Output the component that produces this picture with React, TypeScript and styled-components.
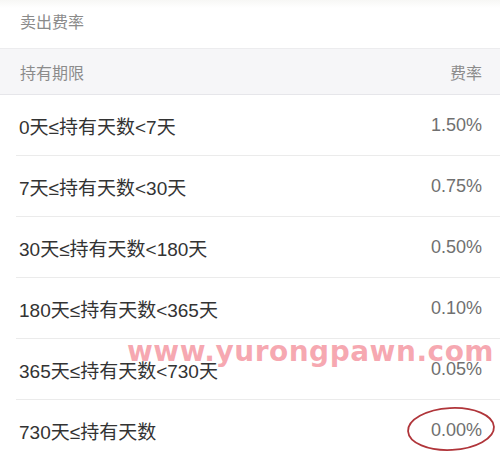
import styled, { createGlobalStyle } from "styled-components";

const GlobalStyle = createGlobalStyle`
  html, body {
    margin: 0;
    padding: 0;
    background: #ffffff;
  }
  body {
    font-family: "Liberation Sans", "Noto Sans CJK SC", sans-serif;
  }
`;

const rates = [
  { term: "0天≤持有天数<7天", rate: "1.50%" },
  { term: "7天≤持有天数<30天", rate: "0.75%" },
  { term: "30天≤持有天数<180天", rate: "0.50%" },
  { term: "180天≤持有天数<365天", rate: "0.10%" },
  { term: "365天≤持有天数<730天", rate: "0.05%" },
  { term: "730天≤持有天数", rate: "0.00%", circled: true },
];

const App = () => {
  return (
    <>
      <GlobalStyle />
      <Page>
        <Title>卖出费率</Title>
        <HeaderRow>
          <span>持有期限</span>
          <span>费率</span>
        </HeaderRow>
        {rates.map((r) => (
          <Row key={r.term}>
            <Term>{r.term}</Term>
            <Rate>
              {r.rate}
              {r.circled && (
                <Circle width="92" height="48" viewBox="0 0 92 48">
                  <ellipse
                    cx="46"
                    cy="24"
                    rx="43"
                    ry="21"
                    fill="none"
                    stroke="#b0353a"
                    strokeWidth="1.8"
                    transform="rotate(-3 46 24)"
                  />
                </Circle>
              )}
            </Rate>
          </Row>
        ))}
        <Watermark>www.yurongpawn.com</Watermark>
      </Page>
    </>
  );
};

export default App;

const Page = styled.div`
  position: relative;
  width: 500px;
  height: 457px;
  overflow: hidden;
  background: linear-gradient(#f7f7f5 0px, #ffffff 8px);
`;

const Title = styled.div`
  height: 48px;
  display: flex;
  align-items: center;
  padding: 0 20px 6px;
  box-sizing: border-box;
  font-family: "Noto Sans CJK SC", sans-serif;
  font-size: 16px;
  color: #8a8a8a;
`;

const HeaderRow = styled.div`
  height: 47px;
  display: flex;
  align-items: center;
  justify-content: space-between;
  padding: 0 18px 0 20px;
  box-sizing: border-box;
  background: #f6f6f8;
  border-top: 1px solid #ececee;
  border-bottom: 1px solid #e6e6ea;
  font-family: "Noto Sans CJK SC", sans-serif;
  font-size: 16px;
  color: #8c8c8c;
`;

const Row = styled.div`
  height: 61px;
  display: flex;
  align-items: center;
  justify-content: space-between;
  padding: 0 18px 0 19px;
  box-sizing: border-box;
  position: relative;
  &::after {
    content: "";
    position: absolute;
    left: 16px;
    right: 0;
    bottom: 0;
    height: 1px;
    background: #ebebeb;
  }
`;

const Term = styled.span`
  font-family: "Liberation Sans", "Noto Sans CJK SC", sans-serif;
  font-size: 19px;
  color: #333333;
`;

const Rate = styled.span`
  position: relative;
  font-family: "Liberation Sans", "Noto Sans CJK SC", sans-serif;
  font-size: 18px;
  color: #707070;
`;

const Circle = styled.svg`
  position: absolute;
  left: -26px;
  top: -15px;
`;

const Watermark = styled.div`
  position: absolute;
  left: 127px;
  top: 335px;
  font-family: "DejaVu Sans", sans-serif;
  font-weight: bold;
  font-size: 28px;
  letter-spacing: 0.5px;
  color: rgba(240, 110, 125, 0.6);
  white-space: nowrap;
  pointer-events: none;
`;
